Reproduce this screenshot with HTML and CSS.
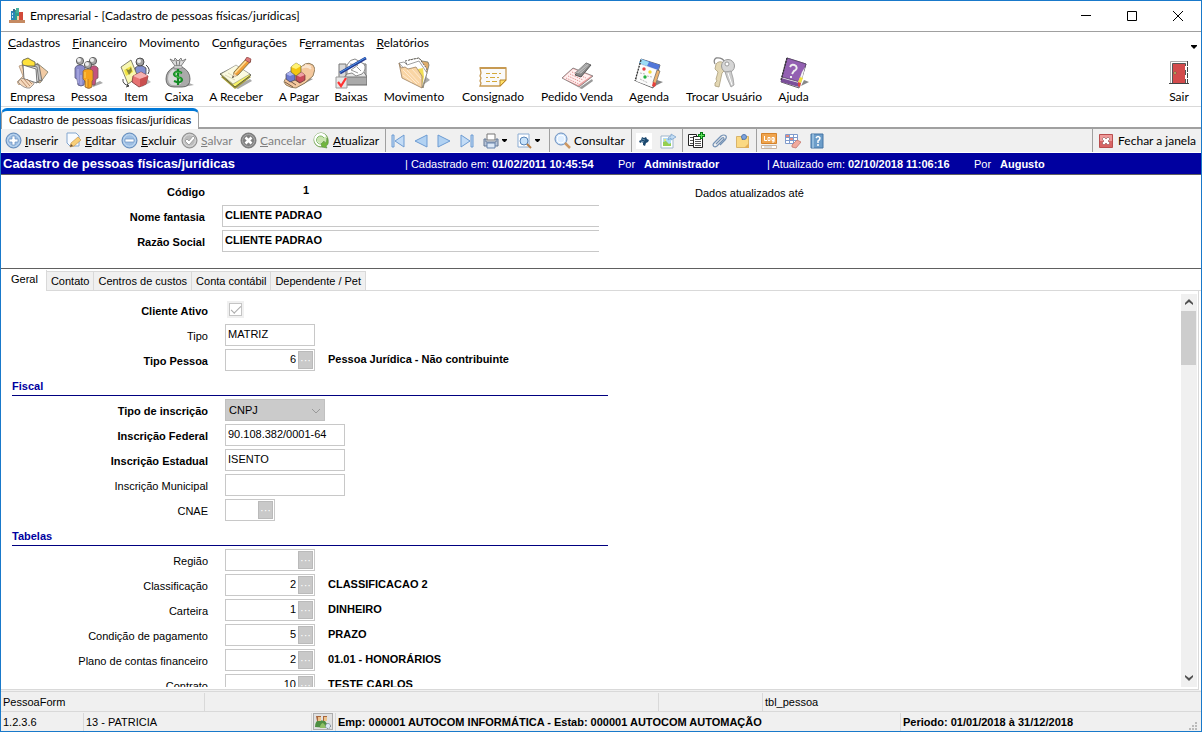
FILE: index.html
```html
<!DOCTYPE html>
<html lang="pt-BR">
<head>
<meta charset="utf-8">
<title>Empresarial - [Cadastro de pessoas físicas/jurídicas]</title>
<link rel="stylesheet" href="styles.css">
</head>
<body>
<div class="window">
  <header class="titlebar">
    <svg class="app-icon" width="16" height="16" viewBox="0 0 16 16"><path d="M2 3h5v9H2z" fill="#2a86b8"/><path d="M4 1h2v3H4z" fill="#3d6f8e"/><path d="M6 2h4v10H6z" fill="#2f9e8b"/><path d="M7 0h3v5H7z" fill="#48b09d"/><path d="M10 4h4v8h-4z" fill="#d24a3a"/><path d="M8 8h2v4H8z" fill="#e9d9a8"/><path d="M0 12h16v3H0z" fill="#c58a62"/><path d="M3 5h1v2H3zm0 3h1v2H3z" fill="#bfe3f2"/></svg>
    <span class="titlebar-text">Empresarial - [Cadastro de pessoas físicas/jurídicas]</span>
    <div class="window-buttons">
      <button aria-label="Minimizar"><svg width="12" height="12" viewBox="0 0 12 12"><path d="M1 5.500h10" stroke="#000"/></svg></button>
      <button aria-label="Maximizar"><svg width="12" height="12" viewBox="0 0 12 12"><path d="M1.500 1.500h9v9h-9z" fill="none" stroke="#000"/></svg></button>
      <button aria-label="Fechar"><svg width="12" height="12" viewBox="0 0 12 12"><path d="M1 1l10 10M11 1L1 11" stroke="#000"/></svg></button>
    </div>
  </header>

  <nav class="menubar">
    <button><u>C</u>adastros</button>
    <button><u>F</u>inanceiro</button>
    <button>Movimento</button>
    <button>C<u>o</u>nfigurações</button>
    <button>F<u>e</u>rramentas</button>
    <button><u>R</u>elatórios</button>
    <svg class="menu-more" width="6" height="4" viewBox="0 0 6 4"><path d="M0 0h6v1L3 4 0 1z"/></svg>
  </nav>

  <div class="toolbar">
    <button>
      <svg width="32" height="32" viewBox="0 0 32 32"><path d="M2 9l3-1 4 12-7 8-2-3 6-6z" fill="#f4d5b5" stroke="#a98a6c" stroke-width=".7"/><path d="M20 6l11 9-8 11-6-2z" fill="#f2cba4" stroke="#776" stroke-width=".8"/><path d="M9 5l13 3 3 16-14-4z" fill="#c4c4c4" stroke="#555" stroke-width=".7"/><path d="M7 7l13 3 2 15-14-3z" fill="#e4e4e4" stroke="#555" stroke-width=".7"/><path d="M5 5l1-2 5-2 3 2 4 2v4H6z" fill="#ffe13a" stroke="#554" stroke-width=".8"/><path d="M6 8l13 4 1 14-13-4z" fill="#fff" stroke="#555" stroke-width=".8"/><path d="M1 25q3-5 7-3l8 3q2 2 0 3l-3 3q-6 1-12-6z" fill="#f6d9bd" stroke="#777" stroke-width=".7"/><path d="M4 23l6 7M7 22l6 7M10 22l5 5" stroke="#aa7a55" stroke-width=".8"/></svg>
      <span>Empresa</span></button>
    <button>
      <svg width="32" height="32" viewBox="0 0 32 32"><path d="M20 30l10-4-3-2-7 3z" fill="#aaa"/><path d="M17 10q5-3 8 1v10l-2 1-1 6h-5z" fill="#c4527e" stroke="#755" stroke-width=".8"/><path d="M2 11q1-3 5-3t5 3v10l-1 7q-3 2-6 0l-1-6-2-1z" fill="#8c8ccc" stroke="#557" stroke-width=".8"/><path d="M5 12v14M8 18v10" stroke="#b9b9ec"/><path d="M10 14q1-2 5-2t5 2v9l-1 1v6q-3 3-7 0v-6l-2-2z" fill="#f7a21c" stroke="#864" stroke-width=".8"/><path d="M12 15v6M14 22v8" stroke="#ffd55f"/><path d="M15 22v9" stroke="#c67a20"/><g stroke="#444" stroke-width=".8" fill="#a5a5a5"><circle cx="7" cy="4" r="3.600"/><circle cx="20" cy="4" r="3.600"/><circle cx="15" cy="8" r="3.600"/></g><g fill="#eee"><circle cx="6" cy="3" r="2"/><circle cx="19" cy="3" r="2"/><circle cx="14" cy="7" r="2"/></g></svg>
      <span>Pessoa</span></button>
    <button>
      <svg width="32" height="32" viewBox="0 0 32 32"><path d="M22 30l9-5-4-3-6 6z" fill="#bbb"/><path d="M15 11q5-5 11 0v6l-4 3h-7z" fill="#8390d0" stroke="#444" stroke-width=".8"/><circle cx="20" cy="5" r="4" fill="#a0a0a0" stroke="#333" stroke-width=".8"/><circle cx="19" cy="4" r="2" fill="#eee"/><path d="M1 10L11 3l7 17-10 7z" fill="#f8f7b0" stroke="#665" stroke-width=".8"/><path d="M4 13l7-4 2 6-7 4z" fill="#f1e343"/><path d="M6 12l3 1 2-3 1 4-3 4z" fill="#88863a"/><path d="M13 19l8-4 7 4-2 8-7 3-7-5z" fill="#e67272" stroke="#733" stroke-width=".8"/><path d="M13 19l7 3 8-3-7-4z" fill="#f6b1b1"/><path d="M20 22v8l6-3 2-8z" fill="#c95050"/><path d="M26 8q5 4 2 9M3 22q-1 5 6 7l-2-2m2 2l-3 1" fill="none" stroke="#444"/></svg>
      <span>Item</span></button>
    <button>
      <svg width="32" height="32" viewBox="0 0 32 32"><path d="M20 30l11-2-5-2z" fill="#aaa"/><path d="M12 9L7 2l4 2 1-3 3 3 3-3 1 3 4-2-5 7z" fill="#ddd" stroke="#666" stroke-width=".8"/><path d="M13 3l1 6M17 3l-1 6" stroke="#777"/><path d="M11 10h8q8 4 8 12 0 8-8 8h-8q-8 0-8-8 0-8 8-12z" fill="#aaa" stroke="#555" stroke-width=".8"/><path d="M10 12q-5 4-5 10 1 6 5 6 11 1 8-5-3-9-8-11z" fill="#d8d8d8"/><path d="M11 9h8v2h-8z" fill="#eee" stroke="#777" stroke-width=".6"/><path d="M19 16q-7-3-8 1 0 2 4 3t4 3q-1 4-8 1M15 12v16" fill="none" stroke="#148a25" stroke-width="2.200"/><path d="M18 16q-6-2-6 1 0 2 3 3t3 3" fill="none" stroke="#58d055" stroke-width=".8"/></svg>
      <span>Caixa</span></button>
    <button>
      <svg width="32" height="32" viewBox="0 0 32 32"><path d="M13 30l17-8 2 2-14 8z" fill="#aaa"/><path d="M1 20l16-10 14 10-16 12z" fill="#a39a32"/><path d="M0 17L16 9l15 9-16 12z" fill="#f5f165" stroke="#444" stroke-width=".8"/><path d="M1 17L16 8l14 9-17 10z" fill="#fbfae0" stroke="#777" stroke-width=".5"/><path d="M5 18l10 5M8 16l7 4" stroke="#ddd8b8"/><path d="M13 20l1-5L27 1l4 3-13 14z" fill="#ef9f38" stroke="#664" stroke-width=".8"/><path d="M15 16L28 2" stroke="#ffe09a" stroke-width="1.500"/><path d="M25 3l2-3 4 2-1 4z" fill="#df7979" stroke="#733" stroke-width=".6"/><path d="M12 21l2-5 3 3z" fill="#ecd2b0"/><path d="M12 21l1-2 1 1z"/></svg>
      <span>A Receber</span></button>
    <button>
      <svg width="32" height="32" viewBox="0 0 32 32"><path d="M15 30l15-8-4-1-13 8z" fill="#999"/><path d="M1 25q1-5 7-5l6-7 8-6q4-2 8 1l2 4-2 7-8 7-9 5q-5 0-10-3z" fill="#f4c89e" stroke="#764" stroke-width=".8"/><path d="M18 11q7-3 10 1M22 8l6 2" stroke="#fae5ce" stroke-width="2" fill="none"/><path d="M2 25l8 5M4 22l9 6M7 20l10 6" stroke="#775c46"/><path d="M3 17l5-3 4 3v6l-5 2-4-3z" fill="#6e7bd0" stroke="#445" stroke-width=".7"/><path d="M3 17l5-3 4 3-5 2z" fill="#aeb5ef"/><path d="M13 18l5-3 4 3v5l-5 3-4-3z" fill="#ca4b58" stroke="#633" stroke-width=".7"/><path d="M13 18l5-3 4 3-5 2z" fill="#efa0a4"/><path d="M8 10l5-4 5 3v6l-5 4-5-4z" fill="#f4c610" stroke="#664" stroke-width=".7"/><path d="M8 10l5-4 5 3-5 3z" fill="#fff274"/></svg>
      <span>A Pagar</span></button>
    <button>
      <svg width="32" height="32" viewBox="0 0 32 32"><path d="M4 7h7v14H4zM26 7h5v12l-5 3z" fill="#d8d8d8" stroke="#777"/><path d="M10 19h22v9H10z" fill="#aaa" stroke="#666"/><path d="M10 20l5-8h12l5 8z" fill="#e7e7e7" stroke="#777"/><path d="M12 8q3-6 8-6l9 5q3 5-2 10l-6 2-4-3-5 1z" fill="#fff" stroke="#888"/><path d="M15 7l8 1-7 5 7 3M22 10l4 4" stroke="#999" fill="none"/><path d="M5 16L31 1" stroke="#233a94" stroke-width="3"/><path d="M5 15.500L31 .5" stroke="#4c94e6"/><path d="M1 20h11v11H1z" fill="#e8e8e8" stroke="#999"/><path d="M3 25l3 4 5-8" fill="none" stroke="#f33" stroke-width="2.200"/></svg>
      <span>Baixas</span></button>
    <button>
      <svg width="32" height="32" viewBox="0 0 32 32"><path d="M22 30l10-7-5-4z" fill="#aaa"/><path d="M11 3l10-2 3 3 6 1 1 3-6 23z" fill="#dfae6c" stroke="#776" stroke-width=".8"/><path d="M7 4l14-3 8 11-7 17z" fill="#fff" stroke="#444" stroke-width=".8" stroke-dasharray="2 1"/><path d="M1 6l5-1 3 3 12-4 8 12-5 15z" fill="#fff" stroke="#888" stroke-width=".8"/><path d="M20 12l5-1 1 9-2 9z" fill="#f2df55"/><path d="M1 6l3 15 20 10 0-12L18 10l-8 2-3-2-4 1z" fill="#f9d5a5" stroke="#9b8062" stroke-width=".8"/><path d="M5 13l14 14M9 13l12 13M14 12l9 10M5 18l9 7" stroke="#ffead0"/></svg>
      <span>Movimento</span></button>
    <button>
      <svg width="32" height="32" viewBox="0 0 32 32"><path d="M3 11h26v12l-6 6H3l1-3-1-2 1-3-1-2 1-3z" fill="#fafafa" stroke="#c79a52" stroke-width="1.300"/><path d="M3 11h26" stroke="#c79a52" stroke-width="2"/><path d="M23 29v-6h6z" fill="#ffe26a" stroke="#b98628"/><path d="M9 16.500h4m2 0h5m2 0h2M9 20.500h2m2 0h5m2 0h2M9 24.500h4m2 0h5" stroke="#d4a93c"/></svg>
      <span>Consignado</span></button>
    <button>
      <svg width="32" height="32" viewBox="0 0 32 32"><path d="M18 31l13-9 1 2-11 8z" fill="#999"/><path d="M1 21L12 11l20 8-14 11z" fill="#eda0a0" stroke="#777" stroke-width=".8"/><path d="M2 21l10-9 18 7-13 9z" fill="#fff0f0"/><path d="M5 21l13 6M7 19l13 6M9 17l13 6M11 15l14 6" stroke="#de8787" stroke-dasharray="1 1"/><path d="M14 18L25 6l5 2-10 12z" fill="#888" stroke="#444" stroke-width=".8"/><path d="M14 16L25 6l4 2-9 9z" fill="#bbb" stroke="#777" stroke-width=".6"/><path d="M16 15L26 7M18 16L28 8" stroke="#888" stroke-width=".7"/></svg>
      <span>Pedido Venda</span></button>
    <button>
      <svg width="32" height="32" viewBox="0 0 32 32"><path d="M22 29l8-4-6-2z" fill="#888"/><path d="M8 2l19 6-7 23-17-7z" fill="#d7dae1" stroke="#444" stroke-width=".8"/><path d="M8 2l19 6-2 5L6 6z" fill="#5277d9"/><path d="M8 2l8 3-2 4-8-3z" fill="#9cdcf4"/><path d="M6 7l18 6-5 17-16-6z" fill="#fbfbfb"/><path d="M20 25l4-12 3 1-5 15z" fill="#edb36f" stroke="#555" stroke-width=".6"/><path d="M20 25l3 1-1 4-3-1z" fill="#e6403c"/><path d="M8 3L2 24" stroke="#333" stroke-width="1.300" stroke-dasharray="2 1"/><circle cx="11" cy="12" r="1.700" fill="#e54242"/><circle cx="17" cy="15" r="1.700" fill="#f1dc38"/><circle cx="12" cy="20" r="1.700" fill="#23b240"/><path d="M7 16l5 1m2 2l5 1M7 22l8 4" stroke="#bbb" stroke-dasharray="2 1"/></svg>
      <span>Agenda</span></button>
    <button>
      <svg width="32" height="32" viewBox="0 0 32 32"><path d="M7 7q-2-4 1-6 6-1 9 4" fill="none" stroke="#888" stroke-width="1.300"/><path d="M8 7q3-4 8-1l2 6-4 4-3 14-4-1v-3l2-2-1-2 2-7-3-3z" fill="#e3d7b3" stroke="#a99d7b" stroke-width=".8"/><circle cx="20" cy="9" r="6.500" fill="#d6d6d6" stroke="#999"/><circle cx="19" cy="7" r="2" fill="#fff" stroke="#888" stroke-width=".8"/><path d="M17 15l6-1 2 7 1 7-3 2-4-9z" fill="#ccc" stroke="#999" stroke-width=".8"/><path d="M20 16l4 12" stroke="#fff"/></svg>
      <span>Trocar Usuário</span></button>
    <button>
      <svg width="32" height="32" viewBox="0 0 32 32"><path d="M23 29l8-4-5-2z" fill="#888"/><path d="M9 1l19 6-7 24-18-6z" fill="#eee" stroke="#444" stroke-width=".8"/><path d="M9 1l19 6-6 18-18-5z" fill="#9360b2" stroke="#59406c" stroke-width=".8"/><path d="M3 21l18 5v4L3 25z" fill="#7b4f99"/><path d="M20 26l4-11 3-5-5 20z" fill="#f5f5f5"/><path d="M22 20l3 1-2 5-3-1z" fill="#f1df41"/><path d="M20 25l3 1-1 4-2-1z" fill="#d84444"/><path d="M9 1L3 23" stroke="#333" stroke-width="1.300" stroke-dasharray="2 1"/><path d="M12 10q2-4 6-1 2 3-2 5l-2 3m-1 2v2" fill="none" stroke="#eee" stroke-width="2"/></svg>
      <span>Ajuda</span></button>
    <button class="toolbar-exit">
      <svg width="32" height="32" viewBox="0 0 32 32"><path d="M7.500 26V4.500H24" fill="none" stroke="#aaa"/><path d="M9.500 6.500h13v20h-13z" fill="#d34b4c" stroke="#555"/><path d="M24.500 4v22" stroke="#444" stroke-dasharray="5 1"/><path d="M22.500 9v4m0 5v4" stroke="#fff"/><path d="M6 26.500h20" stroke="#444"/><circle cx="12" cy="16" r="1.200" fill="#ffe46b" stroke="#444" stroke-width=".6"/></svg>
      <span>Sair</span></button>
  </div>

  <div class="doc-tabs"><button class="doc-tab">Cadastro de pessoas físicas/jurídicas</button></div>

  <div class="actions">
    <div class="action-group action-edit">
      <button><svg width="17" height="17" viewBox="0 0 17 17"><circle cx="8.500" cy="8.500" r="7.500" fill="#9ebfe4" stroke="#5e87b8"/><circle cx="8.500" cy="8.500" r="5.800" fill="none" stroke="#c5dcf2"/><path d="M7 4h3v3h3v3h-3v3H7v-3H4V7h3z" fill="#fff" stroke="#6790c0" stroke-width=".7"/></svg><span><u>I</u>nserir</span></button>
      <button><svg width="17" height="17" viewBox="0 0 17 17"><path d="M2 1h9l3 3v10H5l-3-3z" fill="#f8fbff" stroke="#83a7d0"/><path d="M5 15l1-4 7-6 3 3-7 6z" fill="#f8cf78" stroke="#cd9a4d" stroke-width=".7"/><path d="M5 15l1-3 2 2z" fill="#6b503a"/></svg><span><u>E</u>ditar</span></button>
      <button><svg width="17" height="17" viewBox="0 0 17 17"><circle cx="8.500" cy="8.500" r="7.500" fill="#9ebfe4" stroke="#5e87b8"/><circle cx="8.500" cy="8.500" r="5.800" fill="none" stroke="#c5dcf2"/><path d="M4 7h9v3H4z" fill="#fff" stroke="#6790c0" stroke-width=".7"/></svg><span><u>E</u>xcluir</span></button>
      <button class="dim"><svg width="17" height="17" viewBox="0 0 17 17"><circle cx="8.500" cy="8.500" r="7.500" fill="#bbb" stroke="#888"/><circle cx="8.500" cy="8.500" r="5.800" fill="none" stroke="#ddd"/><path d="M4 9l2-2 2 2 4-5 2 2-6 7z" fill="#fff" stroke="#888" stroke-width=".7"/></svg><span><u>S</u>alvar</span></button>
      <button class="dim"><svg width="17" height="17" viewBox="0 0 17 17"><circle cx="8.500" cy="8.500" r="7.500" fill="#808080" stroke="#777"/><circle cx="8.500" cy="8.500" r="6" fill="none" stroke="#aaa"/><path d="M5.500 5.500l6 6m0-6l-6 6" stroke="#fff" stroke-width="2.500"/></svg><span><u>C</u>ancelar</span></button>
      <button><svg width="17" height="17" viewBox="0 0 17 17"><circle cx="8" cy="8" r="7" fill="#c9e5ae" stroke="#719f52"/><path d="M12 10a5 5 0 1 1 0-5" fill="none" stroke="#fff" stroke-width="3"/><path d="M11 10a4 4 0 1 1 0-4" fill="none" stroke="#82b868"/><path d="M8 12l3-3 1 2q2-1 2-5 3 6-1 8l1 2-5-1z" fill="#71b63d" stroke="#578f3f" stroke-width=".6"/></svg><span><u>A</u>tualizar</span></button>
    </div>
    <div class="action-group action-nav">
      <button aria-label="Primeiro"><svg width="16" height="16" viewBox="0 0 16 16"><path d="M2 2h2v12H2zM14 2v12L5 8z" fill="#c3dcf6" stroke="#6c9bd2"/></svg></button>
      <button aria-label="Anterior"><svg width="16" height="16" viewBox="0 0 16 16"><path d="M14 2v12L2 8z" fill="#b2d2f2" stroke="#6c9bd2"/></svg></button>
      <button aria-label="Próximo"><svg width="16" height="16" viewBox="0 0 16 16"><path d="M2 2v12l12-6z" fill="#b2d2f2" stroke="#6c9bd2"/></svg></button>
      <button aria-label="Último"><svg width="16" height="16" viewBox="0 0 16 16"><path d="M12 2h2v12h-2zM2 2v12l9-6z" fill="#c3dcf6" stroke="#6c9bd2"/></svg></button>
      <button aria-label="Imprimir"><svg width="16" height="16" viewBox="0 0 16 16"><path d="M4 1h8v6H4z" fill="#fff" stroke="#777"/><path d="M1 6h2v3h10V6h2v7H1z" fill="#b8c5d8" stroke="#647894"/><path d="M4 10h8v5H4z" fill="#dce8f6" stroke="#6683ab"/></svg><svg width="5" height="3" viewBox="0 0 5 3"><path d="M0 0h5v1L3 3H2L0 1z"/></svg></button>
      <button aria-label="Visualizar"><svg width="16" height="16" viewBox="0 0 16 16"><path d="M2 1h11v13H2z" fill="#fff" stroke="#8bacd3"/><circle cx="8" cy="8" r="4" fill="#c9e3fa" stroke="#5784b7"/><path d="M11 11l4 4" stroke="#ba7f45" stroke-width="2"/></svg><svg width="5" height="3" viewBox="0 0 5 3"><path d="M0 0h5v1L3 3H2L0 1z"/></svg></button>
    </div>
    <div class="action-group action-search">
      <button><svg width="17" height="17" viewBox="0 0 17 17"><circle cx="7" cy="7" r="6" fill="#c7e0fa" stroke="#6c8fbd"/><circle cx="7" cy="7" r="4" fill="#e0efff" stroke="#fff"/><path d="M11 11l5 5" stroke="#cd9862" stroke-width="2.500"/></svg><span>Consultar</span></button>
    </div>
    <div class="action-group action-icons two">
      <button class="boxed" aria-label="Receita"><svg width="16" height="16" viewBox="0 0 16 16"><path d="M3 8l2-1 1-3 2 1 2-1 1 2 2 1-1 2-2 1-1 3-2-1v-2l-1-1-2 1z" fill="#1c496f"/><path d="M6 6l3 1M5 8l3 1" stroke="#8fb2cc" stroke-width=".7"/></svg></button>
      <button aria-label="Exportar imagem"><svg width="16" height="16" viewBox="0 0 16 16"><path d="M1 3h12v12H1z" fill="#fff" stroke="#9fb6cc"/><path d="M3 5h8v8H3z" fill="#b0dcf4"/><path d="M3 13V9l3-1 3 3 2-1v3z" fill="#95cf52"/><circle cx="5" cy="7" r="1" fill="#f8e456"/><path d="M8 7q0-4 3-4V1l5 3-5 3V5z" fill="#c1dcf4" stroke="#779fc9" stroke-width=".7"/></svg></button>
    </div>
    <div class="action-group action-icons">
      <button aria-label="Duplicar"><svg width="18" height="17" viewBox="0 0 18 17"><path d="M1.500 2.500h8v11h-8z" fill="#fff" stroke="#222"/><path d="M6.500 4.500h9v11h-9z" fill="#fff" stroke="#222"/><path d="M3 5.500h3M3 8.500h3m-3 3h3m2-4h6m-6 2h6m-6 2h6m-6 2h6" stroke="#555"/><path d="M14.500 0v7M11 3.500h7" stroke="#087818" stroke-width="3"/><path d="M14.500 1v5M12 3.500h5" stroke="#5be355"/></svg></button>
      <button aria-label="Anexos"><svg width="16" height="16" viewBox="0 0 16 16"><path d="M5 11l6-6q2-1 2 1l-7 7q-3 2-4-1 0-1 1-2l7-7q3-2 5 0 1 2-1 4l-5 5" fill="none" stroke="#7391b4" stroke-width="1.200"/></svg></button>
      <button aria-label="Notas"><svg width="16" height="16" viewBox="0 0 16 16"><path d="M1.500 3.500h12v11h-12z" fill="#fbd982" stroke="#d9b469"/><path d="M14 10v5H9z" fill="#e3ae55"/><path d="M7 7l2-3" stroke="#555"/><circle cx="9" cy="4" r="2.500" fill="#7ea3dc" stroke="#5277af"/></svg></button>
    </div>
    <div class="action-group action-icons last">
      <button aria-label="Registro"><svg width="16" height="16" viewBox="0 0 16 16"><path d="M.5.5h15v10H.5z" fill="#efa44e" stroke="#d5832b"/><path d="M3.500 3v4.500H6M7 4.500h2v3H7zM13 4.500h-2v3h2v-3V9h-2" fill="none" stroke="#fff"/><path d="M.5 12.500h15v3H.5z" fill="#fff" stroke="#c9b4a0"/><path d="M3 14h8" stroke="#bbb"/></svg></button>
      <button aria-label="Limpar grade"><svg width="16" height="16" viewBox="0 0 16 16"><path d="M.5 1.500h12v9H.5z" fill="#fff" stroke="#809bcc"/><path d="M1 4.500h12M1 7.500h12M4.500 2v9m4-9v9" stroke="#809bcc"/><path d="M1 2h3v2H1zm4 3h3v2H5z" fill="#e98c7b"/><path d="M7 12l5-5 4 2-5 6-4-1z" fill="#f1aa9d" stroke="#c47870" stroke-width=".8"/></svg></button>
      <button aria-label="Ajuda"><svg width="16" height="16" viewBox="0 0 16 16"><path d="M2 1h12v14H2z" fill="#6c9dc9" stroke="#4575a5"/><path d="M4 1v14" stroke="#b9d8ef"/><path d="M7 5q2-3 4 0 0 2-2 3v2m0 1v2" fill="none" stroke="#fff" stroke-width="1.500"/></svg></button>
    </div>
    <div class="action-group action-close">
      <button><svg width="14" height="14" viewBox="0 0 14 14"><path d="M.5.5h13v13H.5z" fill="#d86464" stroke="#b94e4e"/><path d="M1 1h12v6H1z" fill="#ee9999"/><path d="M3 5l2-2 2 2 2-2 2 2-2 2 2 2-2 2-2-2-2 2-2-2 2-2z" fill="#fff" stroke="#855" stroke-width=".6"/></svg><span>Fechar a janela</span></button>
    </div>
  </div>

  <div class="record-bar">
    <h1>Cadastro de pessoas físicas/jurídicas</h1>
    <span>| Cadastrado em:</span><b>01/02/2011 10:45:54</b>
    <span>Por</span><b>Administrador</b>
    <span>| Atualizado em:</span><b>02/10/2018 11:06:16</b>
    <span>Por</span><b>Augusto</b>
  </div>

  <section class="summary">
    <div class="summary-form">
      <label for="codigo">Código</label><output id="codigo">1</output>
      <label for="fantasia">Nome fantasia</label><input id="fantasia" value="CLIENTE PADRAO" readonly>
      <label for="razao">Razão Social</label><input id="razao" value="CLIENTE PADRAO" readonly>
    </div>
    <p class="summary-note">Dados atualizados até</p>
  </section>

  <div class="page-tabs">
    <button class="active">Geral</button><button>Contato</button><button>Centros de custos</button><button>Conta contábil</button><button>Dependente / Pet</button>
    <span class="tabs-rest"></span>
  </div>

  <main class="panel">
    <div class="form">
      <div class="row"><label class="strong" for="ativo">Cliente Ativo</label><span class="check"><input type="checkbox" id="ativo" checked disabled></span></div>
      <div class="row"><label for="tipo">Tipo</label><input class="w-code" id="tipo" value="MATRIZ" readonly></div>
      <div class="row"><label class="strong" for="tpessoa">Tipo Pessoa</label><span class="lookup w-code"><input id="tpessoa" value="6" readonly><button aria-label="Procurar">···</button></span><b>Pessoa Jurídica - Não contribuinte</b></div>
      <h2>Fiscal</h2>
      <div class="row"><label class="strong" for="tinsc">Tipo de inscrição</label><span class="combo"><select id="tinsc" disabled><option>CNPJ</option></select><svg width="10" height="6" viewBox="0 0 10 6"><path d="M1 1l4 4 4-4" fill="none" stroke="#999"/></svg></span></div>
      <div class="row"><label class="strong" for="ifed">Inscrição Federal</label><input class="w-doc" id="ifed" value="90.108.382/0001-64" readonly></div>
      <div class="row"><label class="strong" for="iest">Inscrição Estadual</label><input class="w-doc" id="iest" value="ISENTO" readonly></div>
      <div class="row"><label for="imun">Inscrição Municipal</label><input class="w-doc" id="imun" readonly></div>
      <div class="row"><label for="cnae">CNAE</label><span class="lookup w-short"><input id="cnae" readonly><button aria-label="Procurar">···</button></span></div>
      <h2>Tabelas</h2>
      <div class="row"><label for="regiao">Região</label><span class="lookup w-code"><input id="regiao" readonly><button aria-label="Procurar">···</button></span></div>
      <div class="row"><label for="classe">Classificação</label><span class="lookup w-code"><input id="classe" value="2" readonly><button aria-label="Procurar">···</button></span><b>CLASSIFICACAO 2</b></div>
      <div class="row"><label for="carteira">Carteira</label><span class="lookup w-code"><input id="carteira" value="1" readonly><button aria-label="Procurar">···</button></span><b>DINHEIRO</b></div>
      <div class="row"><label for="cond">Condição de pagamento</label><span class="lookup w-code"><input id="cond" value="5" readonly><button aria-label="Procurar">···</button></span><b>PRAZO</b></div>
      <div class="row"><label for="plano">Plano de contas financeiro</label><span class="lookup w-code"><input id="plano" value="2" readonly><button aria-label="Procurar">···</button></span><b>01.01 - HONORÁRIOS</b></div>
      <div class="row"><label for="contrato">Contrato</label><span class="lookup w-code"><input id="contrato" value="10" readonly><button aria-label="Procurar">···</button></span><b>TESTE CARLOS</b></div>
    </div>
    <div class="scrollbar">
      <button aria-label="Rolar para cima"><svg width="8" height="7" viewBox="0 0 8 7"><path d="M0 4l4-4 4 4v2L4 3 0 6z" fill="#505050"/></svg></button>
      <div class="thumb"></div>
      <button class="down" aria-label="Rolar para baixo"><svg width="8" height="7" viewBox="0 0 8 7"><path d="M0 0l4 3 4-3v2L4 6 0 2z" fill="#505050"/></svg></button>
    </div>
  </main>

  <footer class="status">
    <div class="status-row status-form"><span>PessoaForm</span><span></span><span></span><span>tbl_pessoa</span></div>
    <div class="status-row status-session">
      <span>1.2.3.6</span><span>13 - PATRICIA</span>
      <span class="status-button"><button aria-label="Trocar empresa"><svg width="16" height="14" viewBox="0 0 16 14"><path d="M0 12q0-6 4-7l6 1q3 3 3 7z" fill="#4e8f42"/><path d="M5 12q1-4 3-4l3 3v2H5z" fill="#8ec065"/><path d="M1 1h5v5H2zM8 1h4v5H8z" fill="#a7663d"/><path d="M3 2h3v4H3zm6 0h3v4H9z" fill="#edc28b"/><circle cx="13" cy="11" r="2.500" fill="#dce8f3" stroke="#567" stroke-width="1" stroke-dasharray="1 1"/></svg></button></span>
      <b>Emp: 000001 AUTOCOM INFORMÁTICA - Estab: 000001 AUTOCOM AUTOMAÇÃO</b>
      <b>Periodo: 01/01/2018 à 31/12/2018</b>
      <svg class="grip" width="9" height="9" viewBox="0 0 9 9"><path d="M6 0h2v2H6zM3 3h2v2H3zm3 0h2v2H6zM0 6h2v2H0zm3 0h2v2H3zm3 0h2v2H6z" fill="#bbb"/></svg>
    </div>
  </footer>
</div>
</body>
</html>
```

FILE: styles.css
```css
* { box-sizing: border-box; }

body {
  margin: 0;
  background: #fff;
  color: #000;
  font: 11px/14px "Liberation Sans", Arial, sans-serif;
}

button, input, select {
  margin: 0;
  padding: 0;
  border: 0;
  border-radius: 0;
  background: none;
  color: inherit;
  font: inherit;
  white-space: nowrap;
}

svg { display: block; flex: none; }
h1, h2, p { margin: 0; }

.window {
  display: flex;
  flex-direction: column;
  height: 100vh;
  min-height: 400px;
  border: 1px solid #1979ca;
  overflow: hidden;
}

.window > * { flex: none; }

/* Title bar */
.titlebar {
  display: flex;
  align-items: center;
  height: 31px;
  padding-left: 8px;
  gap: 5px;
  border-bottom: 1px solid #a0a0a0;
}
.titlebar, .menubar, .toolbar, .actions { font: 12px/16px Lato, "Open Sans", sans-serif; }
.titlebar-text { flex: 1; }
.window-buttons { display: flex; }
.window-buttons button { display: grid; place-items: center; width: 46px; height: 28px; }

/* Menu */
.menubar { display: flex; align-items: center; gap: 12px; height: 22px; padding: 0 4px 0 7px; }
.menu-more { margin-left: auto; align-self: flex-end; margin-bottom: 5px; }

/* Main toolbar */
.toolbar {
  display: grid;
  grid-template-columns: 61px 52px 42px 44px 70px 56px 48px 78px 80px 88px 56px 94px 45px 1fr;
  height: 53px;
  padding-left: 1px;
  border-bottom: 1px solid #d9d9d9;
}
.toolbar button { display: flex; flex-direction: column; align-items: center; justify-content: flex-end; padding-bottom: 1px; }
.toolbar .toolbar-exit { justify-self: end; width: 44px; }

/* Open documents */
.doc-tabs { display: flex; height: 22px; padding-top: 1px; border-bottom: 2px solid #a0a0a0; }
.doc-tab {
  height: 21px;
  padding: 0 7px;
  margin-bottom: -2px;
  border: 1px solid #a0a0a0;
  border-top: 3px solid #0078d7;
  border-bottom: 0;
  border-radius: 6px 6px 0 0;
  background: #fff;
}

/* Record actions */
.actions { display: flex; height: 23px; background: #f0f0f0; }
.action-group { display: grid; align-items: center; border-right: 1px solid #a0a0a0; }
.action-group button { display: flex; align-items: center; gap: 3px; }
.action-edit { grid-template-columns: 60px 56px 60px 59px 73px 76px; padding-left: 4px; width: 385px; }
.action-nav { grid-template-columns: 23px 23px 23px 24px 33px 28px; padding-left: 4px; width: 164px; }
.action-search { width: 82px; padding-left: 4px; }
.action-icons { grid-template-columns: repeat(3, 24px); width: 74px; padding-left: 4px; }
.action-icons.two { grid-template-columns: repeat(2, 24px); width: 51px; }
.action-icons.last { border-right: 0; }
.action-group .boxed { width: 16px; background: #fff; }
.action-close { margin-left: auto; border-left: 1px solid #a0a0a0; border-right: 0; padding: 0 5px 0 6px; }
.action-close button { gap: 5px; }
.dim { color: #808080; }

/* Record heading */
.record-bar {
  display: grid;
  grid-template-columns: 402px 87px 126px 26px 123px 81px 126px 26px 1fr;
  align-items: center;
  height: 23px;
  padding-left: 2px;
  background: #0000a0;
  border-top: 1px solid #fff;
  border-bottom: 1px solid #606060;
  color: #fff;
  white-space: nowrap;
}
.record-bar h1 { font-size: 13px; line-height: 16px; }

/* Record summary */
.summary { display: flex; height: 94px; border-bottom: 1px solid #606060; }
.summary-form {
  display: grid;
  grid-template-columns: 204px 377px;
  grid-auto-rows: 22px;
  column-gap: 17px;
  row-gap: 3px;
  padding-top: 5px;
  font-weight: bold;
}
.summary-form label { text-align: right; padding-top: 5px; }
.summary-form output { width: 168px; padding-top: 3px; text-align: center; }
.summary-form input { height: 22px; padding: 0 2px 2px; border: 1px solid #c8c8c8; border-right: 0; }
.summary-note { margin: 11px 0 0 96px; }

/* Page tabs */
.page-tabs { display: flex; height: 22px; align-items: flex-end; }
.page-tabs button {
  height: 20px;
  padding: 0 4px;
  background: #f0f0f0;
  border: 1px solid #d9d9d9;
  border-left: 0;
}
.page-tabs .active { height: 21px; padding: 0 8px 3px 10px; background: #fff; border-bottom: 0; border-top: 0; }
.tabs-rest { flex: 1; height: 1px; background: #d9d9d9; }

/* Scrolled form */
.window > .panel {
  display: flex;
  flex: 1 1 0;
  min-height: 0;
  margin-right: 2px;
  padding: 3px 1px 2px 0;
  border-right: 1px solid #d9d9d9;
  border-bottom: 1px solid #d9d9d9;
}
.form { display: flex; flex: 1; flex-direction: column; gap: 3px; padding: 5px 0 0; overflow: hidden; }
.form > * { flex: none; }
.row { display: flex; height: 22px; }
.row label { width: 207px; margin-right: 17px; padding-top: 5px; text-align: right; }
.row .strong { font-weight: bold; }
.row b { padding: 3px 0 0 13px; }
.row > input, .lookup { height: 22px; border: 1px solid #c8c8c8; }
.row > input { padding: 0 2px 2px; }
.w-code { width: 90px; }
.w-doc { width: 120px; }
.w-short { width: 50px; }
.lookup { display: flex; padding: 1px; }
.lookup input { flex: 1; min-width: 0; padding: 0 2px 2px 0; text-align: right; }
.lookup button { width: 15px; height: 18px; background: #c9c9c9; border: 1px solid #bababa; color: #fff; line-height: 14px; }
.check { display: grid; place-items: center; width: 17px; height: 17px; margin: 2px; background: #f0f0f0; }
.check input { appearance: none; width: 13px; height: 13px; border: 1px solid #c4c4c4; background: #fff; }
.check input::after { content: ""; display: block; width: 9px; height: 4px; margin: 2px 1px; border: solid #aaa; border-width: 0 0 1px 1px; transform: rotate(-45deg); }
.combo { position: relative; width: 100px; height: 22px; }
.combo select { appearance: none; width: 100%; height: 22px; padding: 0 3px; background: #cbcbcb; border: 1px solid #c0c0c0; color: #000; opacity: 1; }
.combo svg { position: absolute; right: 4px; top: 9px; pointer-events: none; }
.form h2 {
  width: 596px;
  max-width: 100%;
  height: 22px;
  margin-left: 11px;
  padding-top: 5px;
  border-bottom: 1px solid #000080;
  color: #0000a0;
  font-size: 11px;
  line-height: 14px;
}

.scrollbar { display: flex; flex-direction: column; width: 16px; background: #f0f0f0; }
.scrollbar button { display: grid; place-items: center; width: 16px; height: 17px; }
.thumb { width: 15px; height: 54px; background: #cdcdcd; }
.scrollbar .down { margin-top: auto; }

/* Status bars */
.status { padding-top: 1px; background: #f0f0f0; }
.status-row { display: grid; align-items: center; height: 20px; border-top: 1px solid #d9d9d9; white-space: nowrap; }
.status-row > * { display: flex; align-items: center; height: 18px; padding-left: 2px; border-left: 1px solid #d9d9d9; }
.status-row > :first-child, .status-row > .grip { border-left: 0; }
.status-form { grid-template-columns: 203px 454px 104px 1fr; }
.status-session { grid-template-columns: 82px 228px 24px 565px 1fr 12px; }
.status-row > .status-button { padding-left: 1px; }
.status-button button { display: grid; place-items: center; width: 20px; height: 17px; border: 1px solid #adadad; background: #e1e1e1; }
.status-row > .grip { align-self: end; height: 9px; padding: 0; }
```
